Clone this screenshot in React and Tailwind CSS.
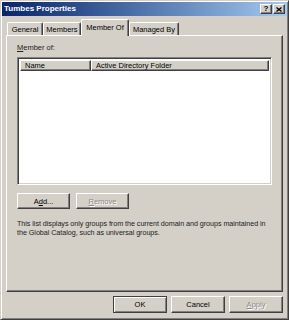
import React from 'react';

const raised = "border border-t-white border-l-white border-r-[#404040] border-b-[#404040] shadow-[inset_-1px_-1px_#808080]";

const Btn = ({ children, disabled, def, className = "" }) => (
    <div
        className={`h-full flex items-center justify-center bg-[#d4d0c8] ${def ? "border border-[#404040] shadow-[inset_1px_1px_#fff,inset_-1px_-1px_#808080]" : raised} ${className}`}
    >
        <span className={disabled ? "text-[#8d8a84] [text-shadow:1px_1px_#fff]" : "text-black"}>{children}</span>
    </div>
);

const Tab = ({ label, w, selected }) => (
    <div
        className={`relative flex items-center justify-center rounded-t-[2px] border border-b-0 border-t-white border-l-white border-r-[#404040] shadow-[inset_-1px_0_#808080] bg-[#d4d0c8] ${selected ? "h-[17px] z-10 -mb-[1px] pb-[2px]" : "h-[13px]"}`}
        style={{ width: w }}
    >
        {label}
    </div>
);

export default function App() {
    return (
        <div className="w-[289px] h-[320px] bg-[#d4d0c8] border border-t-[#d4d0c8] border-l-[#d4d0c8] border-r-[#404040] border-b-[#404040] shadow-[inset_1px_1px_#fff,inset_-1px_-1px_#808080] p-[1px] flex flex-col font-['Liberation_Sans',Arial,sans-serif] text-[7.5px] leading-[9px] text-black overflow-hidden">
            {/* title bar */}
            <div className="h-[14px] flex items-center justify-between bg-gradient-to-r from-[#0a246a] to-[#a6caf0] pl-[2px] pr-[2px]">
                <span className="text-white font-bold text-[8px] leading-[10px]">Tumbes Properties</span>
                <div className="flex items-center gap-[1px]">
                    <div className={`w-[12px] h-[10px] flex items-center justify-center bg-[#d4d0c8] ${raised}`}>
                        <span className="font-bold text-[8px] leading-[8px]">?</span>
                    </div>
                    <div className={`w-[12px] h-[10px] flex items-center justify-center bg-[#d4d0c8] ${raised}`}>
                        <svg width="6" height="5" viewBox="0 0 6 5">
                            <path d="M0.5 0.5 L5.5 4.5 M5.5 0.5 L0.5 4.5" stroke="#000" strokeWidth="1.3" />
                        </svg>
                    </div>
                </div>
            </div>

            {/* tabs */}
            <div className="mt-[3px] px-[4px]">
                <div className="h-[16px] flex items-end pl-[1px]">
                    <Tab label="General" w={36} />
                    <Tab label="Members" w={38} />
                    <Tab label="Member Of" w={48} selected />
                    <Tab label="Managed By" w={50} />
                </div>
                <div className="h-[257px] border border-t-white border-l-white border-r-[#404040] border-b-[#404040] shadow-[inset_-1px_-1px_#808080] px-[10px] pt-[7px] flex flex-col">
                    <div className="h-[10px] leading-[10px] text-[#222]"><span className="underline">M</span>ember of:</div>
                    <div className="mt-[4px] h-[128px] bg-white border border-t-[#808080] border-l-[#808080] border-r-white border-b-white shadow-[inset_1px_1px_#404040,inset_-1px_-1px_#d4d0c8] p-[2px] flex flex-col">
                        <div className="h-[11px] flex">
                            <div className={`w-[71px] bg-[#d4d0c8] flex items-center pl-[4px] ${raised}`}>Name</div>
                            <div className={`flex-1 bg-[#d4d0c8] flex items-center pl-[4px] ${raised}`}>Active Directory Folder</div>
                        </div>
                    </div>
                    <div className="mt-[8px] h-[16px] flex gap-[6px]">
                        <Btn className="w-[53px]">A<span className="underline">d</span>d...</Btn>
                        <Btn className="w-[53px]" disabled><span className="underline">R</span>emove</Btn>
                    </div>
                    <p className="mt-[10px] text-[#222] text-[7.2px] tracking-[-0.05px]">
                        This list displays only groups from the current domain and groups maintained in the Global Catalog, such as universal groups.
                    </p>
                </div>
            </div>

            {/* bottom buttons */}
            <div className="mt-[4px] h-[17px] flex justify-end gap-[4px] pr-[4px]">
                <Btn def className="w-[54px]">OK</Btn>
                <Btn className="w-[54px]">Cancel</Btn>
                <Btn className="w-[54px]" disabled><span className="underline">A</span>pply</Btn>
            </div>
        </div>
    );
}
